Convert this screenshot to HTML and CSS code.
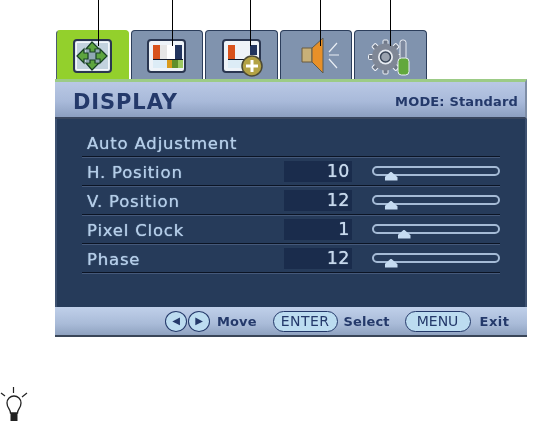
FILE: index.html
```html
<!DOCTYPE html>
<html lang="en">
<head>
<meta charset="utf-8">
<title>DISPLAY menu</title>
<link rel="stylesheet" href="styles.css">
</head>
<body>
<div class="page">
  <span class="leader l1"></span><span class="leader l2"></span><span class="leader l3"></span><span class="leader l4"></span><span class="leader l5"></span>
  <div class="osd">
    <div class="tabs">
      <div class="tab active">
        <svg class="icon" viewBox="0 0 39 34">
          <rect x="1" y="1" width="37" height="32" rx="3" fill="#dfe8f0" stroke="#2a3650" stroke-width="2"/>
          <rect x="3.500" y="3.500" width="32" height="27" fill="#c2d2de" stroke="#f2f6fa"/>
          <rect x="13" y="11" width="13" height="12" fill="#90a8b4"/>
          <g fill="#5da53f" stroke="#173f24" stroke-width="1.200">
            <path d="M19 3l7 7h-4v3h-5v-3h-4z"/>
            <path d="M19 31l7-7h-4v-3h-5v3h-4z"/>
            <path d="M4 17l7-7v4h4v6h-4v4z"/>
            <path d="M34 17l-7-7v4h-4v6h4v4z"/>
          </g>
        </svg>
      </div>
      <div class="tab">
        <svg class="icon" viewBox="0 0 39 34">
          <rect x="1" y="1" width="37" height="32" rx="3" fill="#eef3f8" stroke="#2a3650" stroke-width="2"/>
          <rect x="6" y="6" width="7" height="14" fill="#d8521c"/>
          <rect x="13" y="6" width="7" height="14" fill="#e6e6e6"/>
          <rect x="20" y="6" width="8" height="14" fill="#fff"/>
          <rect x="28" y="6" width="7" height="14" fill="#22355e"/>
          <rect x="6" y="21" width="14" height="8" fill="#dcecf6"/>
          <rect x="20" y="21" width="5" height="8" fill="#d99a1c"/>
          <rect x="25" y="21" width="6" height="8" fill="#5f8f2c"/>
          <rect x="31" y="21" width="5" height="8" fill="#9cc860"/>
          <path d="M6 20.500h30" stroke="#10182c"/>
        </svg>
      </div>
      <div class="tab">
        <svg class="icon" viewBox="0 0 39 34">
          <rect x="1" y="1" width="37" height="32" rx="3" fill="#eef3f8" stroke="#2a3650" stroke-width="2"/>
          <rect x="6" y="6" width="7" height="14" fill="#d8521c"/>
          <rect x="28" y="6" width="7" height="10" fill="#22355e"/>
          <rect x="6" y="21" width="14" height="8" fill="#dcecf6"/>
          <path d="M6 20.500h18" stroke="#10182c"/>
          <circle cx="30" cy="27" r="10" fill="#b3a245" stroke="#4c4a34" stroke-width="1.500"/>
          <path d="M30 21v12M24 27h12" stroke="#fff" stroke-width="3"/>
        </svg>
      </div>
      <div class="tab">
        <svg class="icon" viewBox="0 0 39 34">
          <path d="M6 9h10v14H6z" fill="#c8b078" stroke="#6a5a3c"/>
          <path d="M16 9L27-1v35L16 23z" fill="#e89028" stroke="#5a5a50"/>
          <path d="M33 13l8-9M33 16h10M33 20l8 9" stroke="#e8edf4" stroke-width="1.200" fill="none"/>
        </svg>
      </div>
      <div class="tab">
        <svg class="icon" viewBox="0 0 39 34">
          <g fill="#6f7888" stroke="#eef2f8">
            <rect x="12" y="1" width="5" height="34" rx="1"/>
            <rect x="12" y="1" width="5" height="34" rx="1" transform="rotate(45 14.500 18)"/>
            <rect x="12" y="1" width="5" height="34" rx="1" transform="rotate(90 14.500 18)"/>
            <rect x="12" y="1" width="5" height="34" rx="1" transform="rotate(135 14.500 18)"/>
          </g>
          <circle cx="14.500" cy="18" r="13.500" fill="#7f8796"/>
          <circle cx="14.500" cy="18" r="7.500" fill="#e6eaf0"/>
          <circle cx="14.500" cy="18" r="5" fill="#9aa2ae" stroke="#3a4658" stroke-width="1.500"/>
          <rect x="29" y="1" width="6" height="20" rx="2.500" fill="#7e8aa0" stroke="#e8edf4"/>
          <rect x="27" y="19" width="11" height="17" rx="3.500" fill="#62a83c" stroke="#e8edf4"/>
        </svg>
      </div>
    </div>
    <div class="header">
      <span class="title">DISPLAY</span>
      <span class="mode">MODE: Standard</span>
    </div>
    <div class="main">
      <div class="row"><span class="label">Auto Adjustment</span></div>
      <div class="row"><span class="label">H. Position</span><span class="value">10</span><span class="slider"><i class="thumb t1"></i></span></div>
      <div class="row"><span class="label">V. Position</span><span class="value">12</span><span class="slider"><i class="thumb t1"></i></span></div>
      <div class="row"><span class="label">Pixel Clock</span><span class="value">1</span><span class="slider"><i class="thumb t2"></i></span></div>
      <div class="row"><span class="label">Phase</span><span class="value">12</span><span class="slider"><i class="thumb t1"></i></span></div>
    </div>
    <div class="footer">
      <span class="round">&#9664;</span><span class="round next">&#9654;</span><span class="hint move">Move</span>
      <span class="key">ENTER</span><span class="hint select">Select</span>
      <span class="key menu">MENU</span><span class="hint exit">Exit</span>
    </div>
  </div>
  <svg class="bulb" viewBox="0 0 28 36">
    <path d="M13.500 2v6M1 8l4 3M27 8l-5 4" stroke="#222" stroke-width="1.200" fill="none"/>
    <path d="M10.500 28c0-4-3.500-5-3.500-10a7 7 0 0 1 14 0c0 5-3.500 6-3.500 10z" fill="#fff" stroke="#222" stroke-width="1.300"/>
    <rect x="10.500" y="28" width="7" height="8" fill="#222"/>
  </svg>
</div>
</body>
</html>
```
FILE: styles.css
```css
* { box-sizing: border-box; }
html, body { margin: 0; background: #fff; overflow: hidden; }
.page { position: relative; width: 534px; height: 421px; padding: 30px 0 0 55px; }
.leader { position: absolute; top: 0; width: 1px; height: 46px; background: #000; z-index: 2; }
.l1 { left: 98px; }
.l2 { left: 172px; }
.l3 { left: 250px; }
.l4 { left: 320px; }
.l5 { left: 390px; }

.osd { width: 472px; font-family: "DejaVu Sans", sans-serif; filter: blur(.35px); }
.tabs { display: flex; gap: 2px; height: 49px; padding-left: 1px; }
.tab { width: 72.500px; height: 49px; background: #8093ae; border: 1px solid #2c3e5c; border-bottom: 0; border-radius: 4px 4px 0 0; display: flex; justify-content: center; padding-top: 8px; }
.tab.active { background: #93d02c; border-color: #93d02c; border-left-color: #4a5a70; }
.icon { width: 39px; height: 34px; overflow: visible; }

.header { height: 40px; display: flex; align-items: center; justify-content: space-between; padding: 4px 7px 0 18px; border-top: 3px solid #9ccb86; border-bottom: 2px solid #39465e; border-right: 2px solid #7f8ea6; background: linear-gradient(#b9c8e4, #a9bada 55%, #8c9fc0); }
.title { font-size: 21px; font-weight: 700; letter-spacing: .9px; color: #24396a; }
.mode { font-size: 13px; font-weight: 700; letter-spacing: .15px; color: #24396a; }

.main { height: 188px; padding: 9px 25px 0 25px; background: #263b5a; border-left: 2px solid #3d5170; border-right: 2px solid #3d5170; }
.row { height: 29px; display: flex; align-items: center; border-bottom: 1px solid #0b1424; box-shadow: 0 1px 0 #45597a; color: #b4cde8; }
.label { width: 202px; padding: 2px 0 0 5px; font-size: 16.500px; letter-spacing: .8px; text-shadow: 0 0 1px #b4cde8; }
.value { width: 68px; height: 21px; margin-top: 1px; padding-right: 2px; background: #1a2c4c; font-size: 17.500px; line-height: 21px; letter-spacing: .5px; text-align: right; color: #c6d8ec; text-shadow: 0 0 .8px #c6d8ec; }
.slider { position: relative; width: 128px; height: 10px; margin-left: 20px; border: 2px solid #a5bbd6; border-radius: 5px; }
.thumb { position: absolute; top: 3.500px; width: 13px; height: 9px; background: #c6dcf2; clip-path: polygon(50% 0, 100% 65%, 100% 100%, 0 100%, 0 65%); }
.t1 { left: 10.500px; }
.t2 { left: 23.500px; }

.footer { height: 30px; display: flex; align-items: center; padding-left: 110px; background: linear-gradient(#c0d0ea, #a9bbd8 60%, #8fa2c0); border-bottom: 2px solid #3a4658; color: #24396a; font-size: 13px; font-weight: 700; letter-spacing: .1px; }
.round { width: 22px; height: 21px; margin-right: 1px; border: 1.500px solid #24396a; border-radius: 50%; background: #bcdcf0; font-size: 10px; line-height: 18px; text-align: center; letter-spacing: 0; }
.round.next { margin-right: 7px; }
.hint.move { margin-right: 16px; }
.hint.select { margin-right: 15px; }
.hint.exit { letter-spacing: .5px; }
.key { width: 65px; height: 21px; margin-right: 6px; border: 1.500px solid #24396a; border-radius: 10.500px; background: #bcdcf0; font-size: 14px; font-weight: 400; line-height: 18px; letter-spacing: .4px; text-align: center; }
.key.menu { width: 66px; margin-right: 9px; letter-spacing: 0; }

.bulb { position: absolute; left: 0; top: 385px; width: 28px; height: 36px; }
```
